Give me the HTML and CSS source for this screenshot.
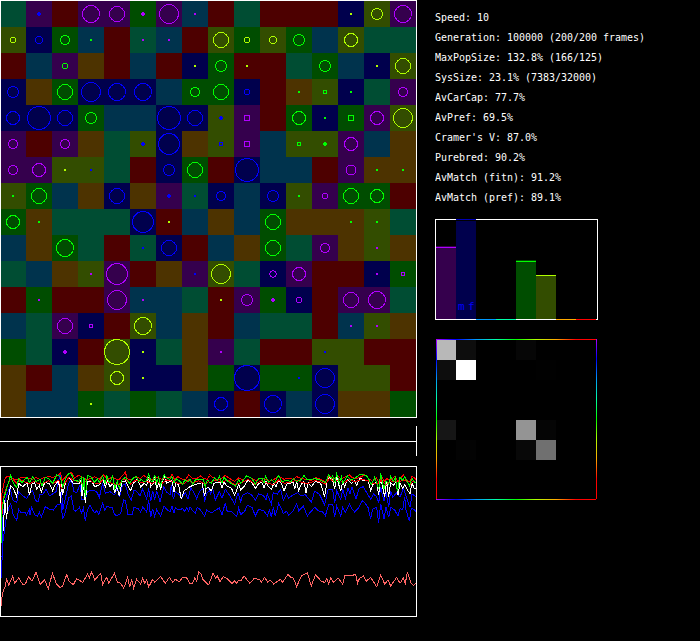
FILE: index.html
```html
<!DOCTYPE html>
<html lang="en">
<head>
<meta charset="UTF-8" />
<meta name="viewport" content="width=device-width, initial-scale=1" />
<title>Population simulation</title>
<link rel="stylesheet" href="styles.css">
</head>
<body>
  <main class="sim">
    <section class="world">
      <svg id="grid" class="grid" width="417" height="418"></svg>
      <div class="timeline"><div class="timeline-line"></div></div>
      <svg id="history" class="history" width="417" height="151" viewBox="0 138 1251 453"></svg>
    </section>

    <section class="side">
      <div class="stats">
        <p>Speed: 10</p>
        <p>Generation: 100000 (200/200 frames)</p>
        <p>MaxPopSize: 132.8% (166/125)</p>
        <p>SysSize: 23.1% (7383/32000)</p>
        <p>AvCarCap: 77.7%</p>
        <p>AvPref: 69.5%</p>
        <p>Cramer's V: 87.0%</p>
        <p>Purebred: 90.2%</p>
        <p>AvMatch (fitn): 91.2%</p>
        <p>AvMatch (pref): 89.1%</p>
      </div>
      <svg class="bars" width="163" height="101">
        <rect class="frame" x="0.5" y="0.5" width="162" height="100" />
        <rect class="bg-P" x="1" y="27" width="20" height="73" />
        <rect class="fg-p" x="1" y="28" width="20" height="1" />
        <rect class="bg-K" x="21" y="0" width="20" height="2" />
        <rect class="bg-B" x="21" y="2" width="20" height="98" />
        <rect class="cap-b" x="21" y="0" width="20" height="1" />
        <rect class="bg-G" x="81" y="41" width="20" height="59" />
        <rect class="fg-g" x="81" y="42" width="20" height="1" />
        <rect class="bg-O" x="101" y="56" width="20" height="44" />
        <rect class="fg-o" x="101" y="56" width="20" height="1" />
        <rect class="fg-c" x="41" y="100" width="20" height="1" />
        <rect class="fg-t" x="61" y="100" width="20" height="1" />
        <rect class="fg-n" x="121" y="100" width="20" height="1" />
        <rect class="fg-r" x="141" y="100" width="20" height="1" />
        <text class="bar-label" x="23" y="91">m</text>
        <text class="bar-label" x="33" y="91">f</text>
      </svg>
      <svg id="matrix" class="matrix" width="161" height="161">
        <defs>
          <linearGradient id="hue-x" gradientUnits="userSpaceOnUse" x1="0" y1="0" x2="160" y2="0"></linearGradient>
          <linearGradient id="hue-y" gradientUnits="userSpaceOnUse" x1="0" y1="0" x2="0" y2="160"></linearGradient>
        </defs>
      </svg>
    </section>
  </main>
  <script src="sim.js"></script>
</body>
</html>
```

FILE: styles.css
```css
* {
  box-sizing: border-box;
}
body {
  margin: 0;
  background: #000;
  color: #fff;
  font-family: "DejaVu Sans Mono", monospace;
  overflow: hidden;
}
svg {
  display: block;
  shape-rendering: crispEdges;
}
.sim {
  display: flex;
  gap: 18px;
  height: 641px;
}
.world {
  width: 417px;
  display: flex;
  flex-direction: column;
}
.timeline {
  height: 30px;
  margin: 8px 0 10px;
  padding-top: 15px;
  border-right: 1px solid #fff;
}
.timeline-line {
  height: 1px;
  background: #fff;
}
/* right column */
.side {
  padding-top: 8px;
}
.stats {
  margin-bottom: 11px;
  font-size: 11px;
  line-height: 20px;
}
/* narrow letters, 6px per character */
.stats p {
  margin: 0;
  width: 260px;
  height: 20px;
  white-space: nowrap;
  transform: scaleX(0.906);
  transform-origin: left;
}
.matrix {
  margin: 19px 0 0 1px;
}
.frame {
  fill: none;
  stroke: #fff;
}
.bar-label {
  font-size: 11px;
  fill: #00f;
}
/* cell backgrounds */
.bg-K { fill: #000; }
.bg-P { fill: #35004d; }
.bg-B { fill: #00004d; }
.bg-C { fill: #00334d; }
.bg-T { fill: #004d33; }
.bg-G { fill: #004d00; }
.bg-O { fill: #334d00; }
.bg-N { fill: #4d3300; }
.bg-R { fill: #4d0000; }
/* bright colors */
.fg-p { fill: #b000ff; }
.fg-b { fill: #00f; }
.fg-c { fill: #0099ff; }
.fg-t { fill: #00ffaa; }
.fg-g { fill: #0f0; }
.fg-o { fill: #b0ff00; }
.fg-n { fill: #ffaa00; }
.fg-r { fill: #f00; }
.cap-b { fill: #0000b4; }
.ring {
  fill: none;
  stroke-width: 1;
}
.ring-p { stroke: #b000ff; }
.ring-b { stroke: #00f; }
.ring-g { stroke: #0f0; }
.ring-o { stroke: #b0ff00; }
/* history lines */
.line {
  fill: none;
  stroke-width: 3;
}
.line-pink { stroke: #ff6464; }
.line-blue { stroke: #00f; }
.line-white { stroke: #fff; }
.line-red { stroke: #f00; }
.line-green { stroke: #0f0; }
```

FILE: sim.js
```js
const NS = 'http://www.w3.org/2000/svg';

function add(parent, name, attrs) {
  const el = document.createElementNS(NS, name);
  for (const key in attrs) el.setAttribute(key, attrs[key]);
  parent.appendChild(el);
  return el;
}

// one letter per cell: Purple, Blue, Cyan, Teal, Green, Olive, browN, Red
const cells = [
  'TPRPPGPCRTRRRBOP',
  'OBGCRTCROGOGCOTT',
  'RCPNRCRBGRRTGCBO',
  'BNGBBBCGGBRNOBTP',
  'BBBGCCBBOPRGBGPO',
  'PRPNTOBNOPCOOPCN',
  'PPOOTRBGRBCCRPNN',
  'OGCNBNPTBCBOPGGR',
  'GNTTTBRCNCGNNNOT',
  'CNGTRTBRCNGTPNON',
  'TCNOPRNPOTBPRRBG',
  'RGRRPCCTRPGBRPPT',
  'CTPBROCNRCTTRCON',
  'GTBROBTNPTRROORR',
  'NRCNOBBNGBGGBOOR',
  'NCCGTGTCBRBCBNNG'
];

// per row: column, color, radius
const rings = [
  '1b2 3p9 4p8 5p2 6p10 7p1 13o1 14o6 15p9',
  '0o3.2 1b4 2g5 3g1 5p1 6p1 8o8 9o3.2 10o4 11g6 13o7',
  '2g3.2 7o1 8g6 9o1 12g6 14o1 15o8',
  '0b6 2g8 3b10 4b9 5b9 7g5 8g8 9b3.2 11g1 12g2.1 13g1 15p5',
  '0b7 1b12 2b8 3g6 6b12 7b8 8b2 9p3 11g7 12g1 13g3 14p7 15o10',
  '0p5 2p5 5b2 6b11 8b2.1 9p3 11g2.1 12g2 13p7',
  '0p5 1p7 2o1 3b1 6b6 7g8 9b12 13p5.5 14g1 15g1',
  '0g1 1g8 4b8 6b2 7b1 8b5 10b6 11g1 12p3.2 13g8 14g7',
  '0g7 1g1 5b11 6o1 10g8 13g1 14g1',
  '2g9 5b1 6b8 10g8 12p5 14p1',
  '3p1 4p11 7b1 8o10 10p3.6 11p7 14p1 15p2.1',
  '1p1 4p10 5p1 8o1 9p6 10p2 11p3.2 13p8 14p9',
  '2p8 3p2.1 5o9 13p1 14p1',
  '2p2 4o13 5o1 8p1 12b1',
  '4o7 5o1 9b13 11b1 12b10',
  '3o1 8b7 10b9 12b10'
];

const grid = document.getElementById('grid');
cells.forEach((row, r) => {
  [...row].forEach((c, i) => {
    add(grid, 'rect', { class: 'bg-' + c, x: i * 26, y: 1 + r * 26, width: 26, height: 26 });
  });
});
rings.forEach((row, r) => {
  row.split(' ').forEach(item => {
    const [, col, color, size] = item.match(/(\d+)([a-z])([\d.]+)/);
    const x = col * 26 + 13;
    const y = r * 26 + 14;
    if (size === '1') {
      add(grid, 'rect', { class: 'fg-' + color, x: x - 1, y: y - 1, width: 2, height: 2 });
    } else if (size === '2') {
      add(grid, 'rect', { class: 'fg-' + color, x: x - 2, y: y - 1, width: 4, height: 2 });
      add(grid, 'rect', { class: 'fg-' + color, x: x - 1, y: y - 2, width: 2, height: 4 });
    } else if (size < 3.1) {
      // small ones come out square
      const s = Math.floor(size);
      add(grid, 'rect', { class: 'ring ring-' + color, x: x - s + 0.5, y: y - s + 0.5, width: 2 * s - 1, height: 2 * s - 1 });
    } else {
      add(grid, 'circle', { class: 'ring ring-' + color, cx: x, cy: y, r: size - 0.5 });
    }
  });
});
add(grid, 'rect', { class: 'frame', x: 0.5, y: 0.5, width: 416, height: 417 });

// history, two halves for every line, three units per pixel
const series = [
  ['pink',
    '4,557 7,520 15,500 20,478 26,496 38,469 44,490 56,474 68,493 76,492 86,470 96,484 108,457 120,493 134,480 145,507 157,460 170,493 180,502 188,498 200,464 208,485 220,494 230,476 248,487 263,462 268,474 275,455 284,480 302,460 308,493 320,472 326,490 343,460 352,487 362,490 371,505 383,472 389,502 395,478 401,505 410,478 422,492 428,474 434,490 440,478 446,501 458,478 464,487 482,470 496,490 508,472 518,487 526,478 538,485 548,472 560,474 570,490 578,490 584,474 590,484 596,455 602,460 608,478 626,495',
    '2,495 15,460 22,474 28,468 36,485 46,470 60,478 72,490 80,482 86,490 92,480 100,480 108,468 126,490 138,476 155,478 160,487 170,472 180,487 186,480 197,492 218,478 224,487 240,463 248,472 256,474 266,500 280,468 298,458 310,498 322,465 330,472 340,484 350,487 356,476 362,492 368,474 376,487 390,474 404,492 410,468 424,467 443,464 449,490 454,476 466,468 474,484 488,472 506,500 518,465 530,492 540,480 548,498 566,472 576,490 586,474 592,490 598,456 608,487 616,496 626,488'],
  ['blue',
    '4,475 8,370 14,330 20,285 28,258 32,250 40,285 50,301 56,268 62,276 74,276 80,285 88,268 90,285 95,262 104,285 112,288 118,276 124,291 136,260 148,267 160,270 172,254 180,252 182,240 188,298 196,276 206,234 214,228 222,270 228,274 238,262 244,280 250,264 256,303 262,270 270,256 278,270 284,278 290,272 296,284 308,248 314,270 320,260 336,262 344,284 352,287 362,280 371,240 376,242 384,284 396,285 402,262 414,266 422,276 428,262 434,268 440,276 446,240 452,291 458,266 464,289 470,268 482,289 492,257 500,268 510,276 516,258 522,280 526,262 534,270 548,266 554,274 560,262 566,273 570,260 578,272 586,280 592,262 600,268 614,289 620,270 626,274',
    '2,274 12,278 20,272 34,264 42,285 52,248 58,276 70,274 86,290 92,264 98,284 110,274 118,255 132,262 142,288 152,268 168,273 178,287 184,270 190,290 196,262 202,288 212,250 218,262 226,280 236,274 242,285 256,272 266,251 272,272 286,258 298,288 306,278 320,262 330,272 344,276 352,287 362,254 374,252 380,292 386,258 398,288 404,262 412,278 424,252 430,264 440,276 452,264 462,242 470,248 480,262 488,296 494,268 506,262 512,308 518,252 528,296 534,262 542,292 548,262 560,270 570,288 576,266 584,270 590,230 594,270 604,303 610,264 618,268 626,276'],
  ['blue',
    '6,410 8,300 14,250 22,220 30,200 38,240 50,248 56,215 66,225 80,236 90,215 98,212 106,240 114,246 120,222 128,224 138,208 148,228 158,222 168,215 176,180 182,160 188,270 194,245 206,190 214,180 222,215 230,218 240,195 246,238 256,240 262,215 276,210 290,215 298,232 308,190 316,220 330,215 344,225 352,200 358,232 368,195 376,192 384,222 394,240 402,210 412,216 420,228 428,206 434,222 440,236 446,205 452,244 458,212 464,240 470,212 480,245 492,200 500,216 510,225 514,195 520,238 526,215 536,222 544,236 556,218 564,238 572,204 580,214 590,236 598,216 608,204 614,245 620,220 626,215',
    '2,205 8,222 14,205 22,240 34,215 42,235 52,208 66,228 80,252 90,218 98,245 104,225 118,218 132,226 142,240 152,222 166,226 174,240 178,222 190,252 196,218 208,222 218,208 226,242 236,222 242,234 256,224 268,218 280,228 292,224 300,234 310,246 320,214 334,222 350,255 360,210 374,208 380,250 386,212 398,238 404,208 412,235 420,205 426,222 432,200 444,236 454,205 466,200 476,218 488,238 496,222 506,230 512,250 518,200 528,244 534,215 542,262 548,212 554,232 566,218 576,232 586,205 596,235 606,262 612,222 626,232'],
  ['white',
    '10,333 14,240 20,298 24,240 32,198 40,205 50,230 56,190 68,200 82,188 88,226 96,192 104,188 110,208 118,196 124,216 134,188 148,190 158,212 164,196 176,182 182,248 184,190 188,224 196,190 206,172 222,192 238,190 244,180 246,228 250,192 256,248 262,184 276,185 284,200 298,195 308,178 316,200 322,182 330,200 338,190 344,220 350,200 358,228 366,185 376,183 392,212 400,190 412,178 422,200 432,190 440,196 446,170 452,200 460,190 464,172 470,205 476,190 482,208 492,168 500,190 516,182 522,215 528,185 536,196 544,238 552,212 560,208 570,200 582,195 592,192 606,188 614,228 618,205 628,200',
    '2,205 10,212 18,190 36,186 42,205 48,186 56,198 70,204 80,226 92,194 98,210 108,200 120,180 132,188 142,206 152,190 162,188 168,204 174,184 180,198 190,208 198,190 204,200 212,180 220,190 228,214 236,192 248,190 256,186 260,208 266,185 272,212 280,192 288,185 294,218 300,188 310,200 322,184 338,190 350,230 356,190 362,172 374,180 380,208 386,172 398,214 404,184 410,200 418,178 430,190 440,182 446,196 456,172 466,182 480,180 488,212 494,195 506,186 512,226 518,172 530,230 536,184 542,230 548,188 556,196 564,186 570,226 576,190 584,206 590,195 606,222 612,188 618,205 626,204'],
  ['red',
    '4,305 6,220 14,178 22,168 32,172 42,178 50,180 60,174 76,172 88,176 96,178 108,172 120,178 134,172 148,170 160,172 172,168 182,158 186,182 196,172 206,162 214,157 224,174 236,166 248,172 258,178 266,178 284,170 298,178 310,164 322,178 336,172 344,175 356,180 366,168 376,157 382,176 394,180 408,170 422,176 430,166 440,172 452,180 464,176 474,172 486,178 500,172 510,174 516,162 524,180 534,170 544,176 556,180 566,165 578,176 590,176 602,168 610,174 622,178 628,168',
    '4,164 14,172 28,180 40,176 52,166 66,176 80,184 92,174 104,180 118,168 134,176 144,182 156,175 168,176 184,184 196,180 212,168 228,178 244,174 256,178 266,170 280,176 296,178 310,182 324,173 338,178 352,186 364,168 378,178 388,166 400,178 412,170 424,164 432,172 446,176 460,170 470,164 482,176 494,184 506,174 514,190 522,172 530,185 536,176 546,180 560,170 570,184 586,165 596,180 606,186 612,168 626,180'],
  ['red',
    '4,305 10,235 20,200 30,178 42,182 50,190 62,180 78,188 90,190 104,184 116,192 130,190 146,182 160,190 176,180 184,205 196,188 206,172 220,180 236,185 250,190 264,178 280,188 296,192 310,178 324,188 340,190 356,196 368,178 378,180 392,192 408,180 424,188 440,184 456,190 470,184 484,192 500,180 516,184 534,190 552,192 566,180 580,188 596,182 614,192 628,184',
    '2,190 20,180 40,186 60,180 80,194 100,188 120,178 140,192 160,182 180,190 196,194 212,180 230,190 250,186 266,180 284,188 300,190 322,182 340,186 352,192 364,176 380,186 392,178 408,188 424,178 440,186 460,178 480,182 494,192 510,190 522,182 534,196 546,182 562,186 576,184 592,180 606,196 614,184 626,190'],
  ['green',
    '4,370 6,270 12,235 20,205 32,166 36,180 44,195 50,202 56,176 66,188 74,178 82,172 88,188 98,170 108,185 120,178 126,198 136,172 148,178 158,190 170,165 180,170 188,200 194,182 206,160 214,162 222,180 236,184 244,172 248,210 252,172 256,232 262,166 274,172 284,188 292,175 298,188 308,168 316,192 320,166 328,188 332,182 338,168 344,205 352,184 358,205 366,180 376,172 388,190 398,176 408,168 416,184 424,178 432,186 440,182 446,162 452,182 458,185 464,164 470,190 476,172 482,196 492,164 498,172 510,178 516,170 522,190 528,176 540,184 548,194 554,180 566,185 570,178 578,192 586,180 600,178 610,178 616,200 622,180 628,182',
    '2,186 10,190 20,174 28,180 34,168 42,190 48,172 60,184 72,192 82,198 92,178 98,190 108,178 116,167 130,174 142,192 152,176 162,174 168,190 172,168 182,188 190,178 200,188 212,166 222,185 236,180 248,186 256,176 266,184 276,182 288,167 298,180 310,178 322,176 336,180 352,188 362,164 370,176 374,168 380,190 386,162 394,188 400,170 404,190 412,178 418,168 428,180 444,172 456,163 474,166 482,176 490,194 500,172 512,208 518,160 528,208 534,182 542,192 548,168 556,185 562,172 568,214 576,172 584,180 590,170 604,198 612,176 620,186 626,186']
];

const historyChart = document.getElementById('history');
series.forEach(([color, first, second]) => {
  add(historyChart, 'polyline', { class: 'line line-' + color, points: first });
  add(historyChart, 'polyline', { class: 'line line-' + color, points: second, transform: 'translate(624 0)' });
});
add(historyChart, 'rect', { class: 'line line-white', x: 1.5, y: 139.5, width: 1248, height: 450 });

// mating matrix: column, row, gray
const matrix = document.getElementById('matrix');
[
  [0, 0, 184], [1, 0, 13], [4, 0, 6],
  [0, 1, 13], [1, 1, 255], [5, 1, 1],
  [0, 4, 22], [4, 4, 148], [5, 4, 5],
  [1, 5, 3], [4, 5, 8], [5, 5, 112]
].forEach(([x, y, v]) => {
  add(matrix, 'rect', { x: x * 20, y: y * 20 + 1, width: 20, height: 20, fill: `rgb(${v},${v},${v})` });
});

const hues = ['#b000ff', '#0000ff', '#0099ff', '#00ffaa', '#00ff00', '#b0ff00', '#ffaa00', '#ff0000', '#ff0000'];
['hue-x', 'hue-y'].forEach(id => {
  const gradient = document.getElementById(id);
  hues.forEach((h, i) => add(gradient, 'stop', { offset: i / 8, 'stop-color': h }));
});
add(matrix, 'rect', { x: 0, y: 0, width: 160, height: 1, fill: 'url(#hue-x)' });
add(matrix, 'rect', { x: 0, y: 160, width: 160, height: 1, fill: 'url(#hue-x)' });
add(matrix, 'rect', { x: 0, y: 0, width: 1, height: 160, fill: 'url(#hue-y)' });
add(matrix, 'rect', { x: 160, y: 0, width: 1, height: 160, fill: 'url(#hue-y)' });
```
